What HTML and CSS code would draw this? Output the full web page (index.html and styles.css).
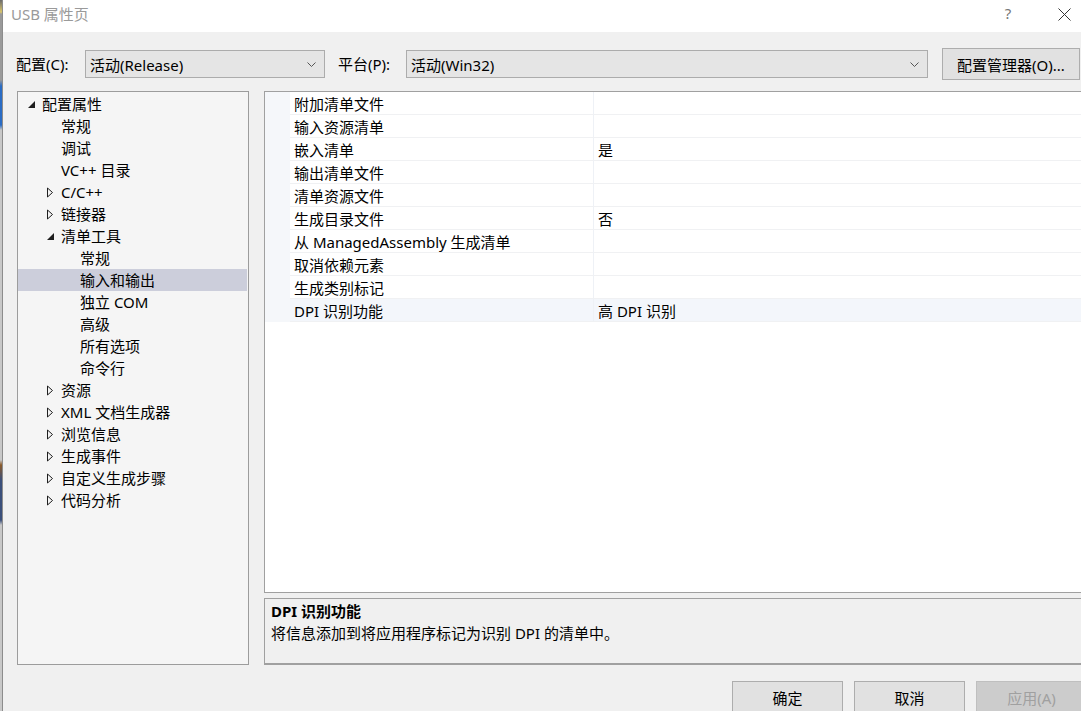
FILE: index.html
```html
<!DOCTYPE html>
<html lang="zh-CN">
<head>
    <meta charset="UTF-8">
    <title>USB 属性页</title>
    <link rel="stylesheet" href="styles.css">
</head>
<body>
<div class="screen">
    <div class="behind"></div>
    <div class="dialog">
        <div class="titlebar">
            <span class="title">USB 属性页</span>
            <span class="help">?</span>
            <svg class="close" width="13" height="13" viewBox="0 0 13 13"><path d="M0.5 0.5 L12.5 12.5 M12.5 0.5 L0.5 12.5" stroke="#333" stroke-width="1" fill="none"/></svg>
        </div>

        <div class="toolbar">
            <span class="label config-label">配置(C):</span>
            <div class="combo config">
                <span>活动(Release)</span>
                <svg class="chevron" width="9" height="5" viewBox="0 0 9 5"><path d="M0.5 0.5 L4.5 4.5 L8.5 0.5" stroke="#555" fill="none"/></svg>
            </div>
            <span class="label platform-label">平台(P):</span>
            <div class="combo platform">
                <span>活动(Win32)</span>
                <svg class="chevron" width="9" height="5" viewBox="0 0 9 5"><path d="M0.5 0.5 L4.5 4.5 L8.5 0.5" stroke="#555" fill="none"/></svg>
            </div>
            <div class="button manager">配置管理器(O)...</div>
        </div>

        <div class="main">
            <div class="tree">
                <div class="node lv0"><span class="toggle"><svg width="9" height="9" viewBox="0 0 9 9"><path d="M8 1 L8 8 L1 8 Z" fill="#1e1e1e"/></svg></span>配置属性</div>
                <div class="node lv1"><span class="toggle"></span>常规</div>
                <div class="node lv1"><span class="toggle"></span>调试</div>
                <div class="node lv1"><span class="toggle"></span>VC++ 目录</div>
                <div class="node lv1"><span class="toggle"><svg width="8" height="11" viewBox="0 0 8 11"><path d="M1.5 1 L6.5 5.5 L1.5 10 Z" fill="none" stroke="#1e1e1e"/></svg></span>C/C++</div>
                <div class="node lv1"><span class="toggle"><svg width="8" height="11" viewBox="0 0 8 11"><path d="M1.5 1 L6.5 5.5 L1.5 10 Z" fill="none" stroke="#1e1e1e"/></svg></span>链接器</div>
                <div class="node lv1"><span class="toggle"><svg width="9" height="9" viewBox="0 0 9 9"><path d="M8 1 L8 8 L1 8 Z" fill="#1e1e1e"/></svg></span>清单工具</div>
                <div class="node lv2"><span class="toggle"></span>常规</div>
                <div class="node lv2 selected"><span class="toggle"></span>输入和输出</div>
                <div class="node lv2"><span class="toggle"></span>独立 COM</div>
                <div class="node lv2"><span class="toggle"></span>高级</div>
                <div class="node lv2"><span class="toggle"></span>所有选项</div>
                <div class="node lv2"><span class="toggle"></span>命令行</div>
                <div class="node lv1"><span class="toggle"><svg width="8" height="11" viewBox="0 0 8 11"><path d="M1.5 1 L6.5 5.5 L1.5 10 Z" fill="none" stroke="#1e1e1e"/></svg></span>资源</div>
                <div class="node lv1"><span class="toggle"><svg width="8" height="11" viewBox="0 0 8 11"><path d="M1.5 1 L6.5 5.5 L1.5 10 Z" fill="none" stroke="#1e1e1e"/></svg></span>XML 文档生成器</div>
                <div class="node lv1"><span class="toggle"><svg width="8" height="11" viewBox="0 0 8 11"><path d="M1.5 1 L6.5 5.5 L1.5 10 Z" fill="none" stroke="#1e1e1e"/></svg></span>浏览信息</div>
                <div class="node lv1"><span class="toggle"><svg width="8" height="11" viewBox="0 0 8 11"><path d="M1.5 1 L6.5 5.5 L1.5 10 Z" fill="none" stroke="#1e1e1e"/></svg></span>生成事件</div>
                <div class="node lv1"><span class="toggle"><svg width="8" height="11" viewBox="0 0 8 11"><path d="M1.5 1 L6.5 5.5 L1.5 10 Z" fill="none" stroke="#1e1e1e"/></svg></span>自定义生成步骤</div>
                <div class="node lv1"><span class="toggle"><svg width="8" height="11" viewBox="0 0 8 11"><path d="M1.5 1 L6.5 5.5 L1.5 10 Z" fill="none" stroke="#1e1e1e"/></svg></span>代码分析</div>
            </div>

            <div class="right">
                <div class="grid">
                    <div class="row"><span class="gutter"></span><span class="name">附加清单文件</span><span class="value"></span></div>
                    <div class="row"><span class="gutter"></span><span class="name">输入资源清单</span><span class="value"></span></div>
                    <div class="row"><span class="gutter"></span><span class="name">嵌入清单</span><span class="value">是</span></div>
                    <div class="row"><span class="gutter"></span><span class="name">输出清单文件</span><span class="value"></span></div>
                    <div class="row"><span class="gutter"></span><span class="name">清单资源文件</span><span class="value"></span></div>
                    <div class="row"><span class="gutter"></span><span class="name">生成目录文件</span><span class="value">否</span></div>
                    <div class="row"><span class="gutter"></span><span class="name">从 ManagedAssembly 生成清单</span><span class="value"></span></div>
                    <div class="row"><span class="gutter"></span><span class="name">取消依赖元素</span><span class="value"></span></div>
                    <div class="row"><span class="gutter"></span><span class="name">生成类别标记</span><span class="value"></span></div>
                    <div class="row current"><span class="gutter"></span><span class="name">DPI 识别功能</span><span class="value">高 DPI 识别</span></div>
                    <div class="grid-fill"></div>
                </div>
                <div class="description">
                    <div class="desc-title">DPI 识别功能</div>
                    <div class="desc-text">将信息添加到将应用程序标记为识别 DPI 的清单中。</div>
                </div>
            </div>
        </div>

        <div class="footer">
            <div class="button">确定</div>
            <div class="button">取消</div>
            <div class="button disabled">应用(A)</div>
        </div>
    </div>
</div>
</body>
</html>
```

FILE: styles.css
```css
body {
    margin: 0;
    background: #f0f0f0;
    font-family: "Noto Sans", "Noto Sans CJK SC", sans-serif;
    font-size: 15px;
    color: #000;
}
.screen {
    display: flex;
    width: 1081px;
    height: 711px;
    overflow: hidden;
}
.behind {
    width: 2px;
    flex: none;
    background: linear-gradient(#6b6b6b 0, #d9c56a 12px, #9a9a9a 14px, #9a9a9a 80px, #2a6cc4 86px, #2a6cc4 125px, #c8c8c8 130px, #c8c8c8 460px, #8a5a2a 465px, #3b4f7a 480px, #3b4f7a 520px, #c8c8c8 525px);
}
.dialog {
    flex: none;
    width: 1090px;
    display: flex;
    flex-direction: column;
    border-left: 1px solid #8c8c8c;
    background: #f0f0f0;
}
.titlebar {
    height: 32px;
    background: #fff;
    display: flex;
    align-items: flex-start;
    flex: none;
}
.title {
    color: #9a9a9a;
    margin-left: 8px;
    line-height: 28px;
}
.help {
    margin-left: 916px;
    color: #777;
    font-size: 15px;
    line-height: 26px;
}
.close {
    margin-left: 47px;
    margin-top: 8px;
}
.toolbar {
    height: 59px;
    box-sizing: border-box;
    padding: 16px 0 0 13px;
    display: flex;
    align-items: flex-start;
    flex: none;
}
.label {
    line-height: 32px;
    flex: none;
}
.config-label {
    width: 69px;
}
.combo {
    box-sizing: border-box;
    height: 28px;
    margin-top: 2px;
    background: #e5e5e5;
    border: 1px solid #acacac;
    display: flex;
    align-items: center;
    justify-content: space-between;
    padding: 0 8px 0 4px;
    flex: none;
}
.combo.config {
    width: 240px;
}
.platform-label {
    width: 68px;
    margin-left: 13px;
}
.combo.platform {
    width: 522px;
}
.button {
    box-sizing: border-box;
    height: 32px;
    width: 111px;
    background: #e1e1e1;
    border: 1px solid #adadad;
    display: flex;
    align-items: center;
    justify-content: center;
    flex: none;
}
.button.manager {
    width: 138px;
    margin-left: 14px;
}
.button.disabled {
    background: #cccccc;
    border-color: #bfbfbf;
    color: #a0a0a0;
}
.main {
    display: flex;
    height: 574px;
    flex: none;
}
.tree {
    width: 232px;
    margin-left: 14px;
    box-sizing: border-box;
    border: 1px solid #9c9c9c;
    background: #f5f5f5;
    padding: 1px 1px 0 0;
}
.node {
    height: 22px;
    line-height: 22px;
    display: flex;
    align-items: center;
    white-space: nowrap;
}
.node.lv0 { padding-left: 8px; }
.node.lv1 { padding-left: 27px; }
.node.lv2 { padding-left: 46px; }
.node.selected {
    background: #cccedb;
}
.toggle {
    width: 16px;
    height: 22px;
    flex: none;
    display: flex;
    align-items: center;
}
.toggle svg {
    margin-left: 1px;
}
.right {
    flex: 1;
    margin-left: 15px;
    display: flex;
    flex-direction: column;
}
.grid {
    height: 502px;
    box-sizing: border-box;
    border: 1px solid #a0a0a0;
    border-right: none;
    background: #fff;
    display: flex;
    flex-direction: column;
}
.row {
    display: flex;
    height: 23px;
    line-height: 24px;
    flex: none;
}
.gutter {
    width: 25px;
    flex: none;
    background: #f5f7fa;
}
.name {
    width: 299px;
    flex: none;
    padding-left: 4px;
    border-bottom: 1px solid #f0f1f3;
    white-space: nowrap;
}
.value {
    flex: 1;
    padding-left: 4px;
    border-left: 1px solid #eef1f6;
    border-bottom: 1px solid #f0f1f3;
}
.row.current .name,
.row.current .value {
    background: #f3f6fb;
}
.grid-fill {
    flex: 1;
}
.description {
    margin-top: 5px;
    height: 67px;
    box-sizing: border-box;
    border: 1px solid #a0a0a0;
    border-bottom-width: 2px;
    border-right: none;
    padding: 1px 0 0 6px;
    background: #f0f0f0;
}
.desc-title {
    font-weight: bold;
    line-height: 22px;
}
.desc-text {
    line-height: 22px;
}
.footer {
    display: flex;
    gap: 11px;
    padding: 16px 0 0 729px;
}
```
